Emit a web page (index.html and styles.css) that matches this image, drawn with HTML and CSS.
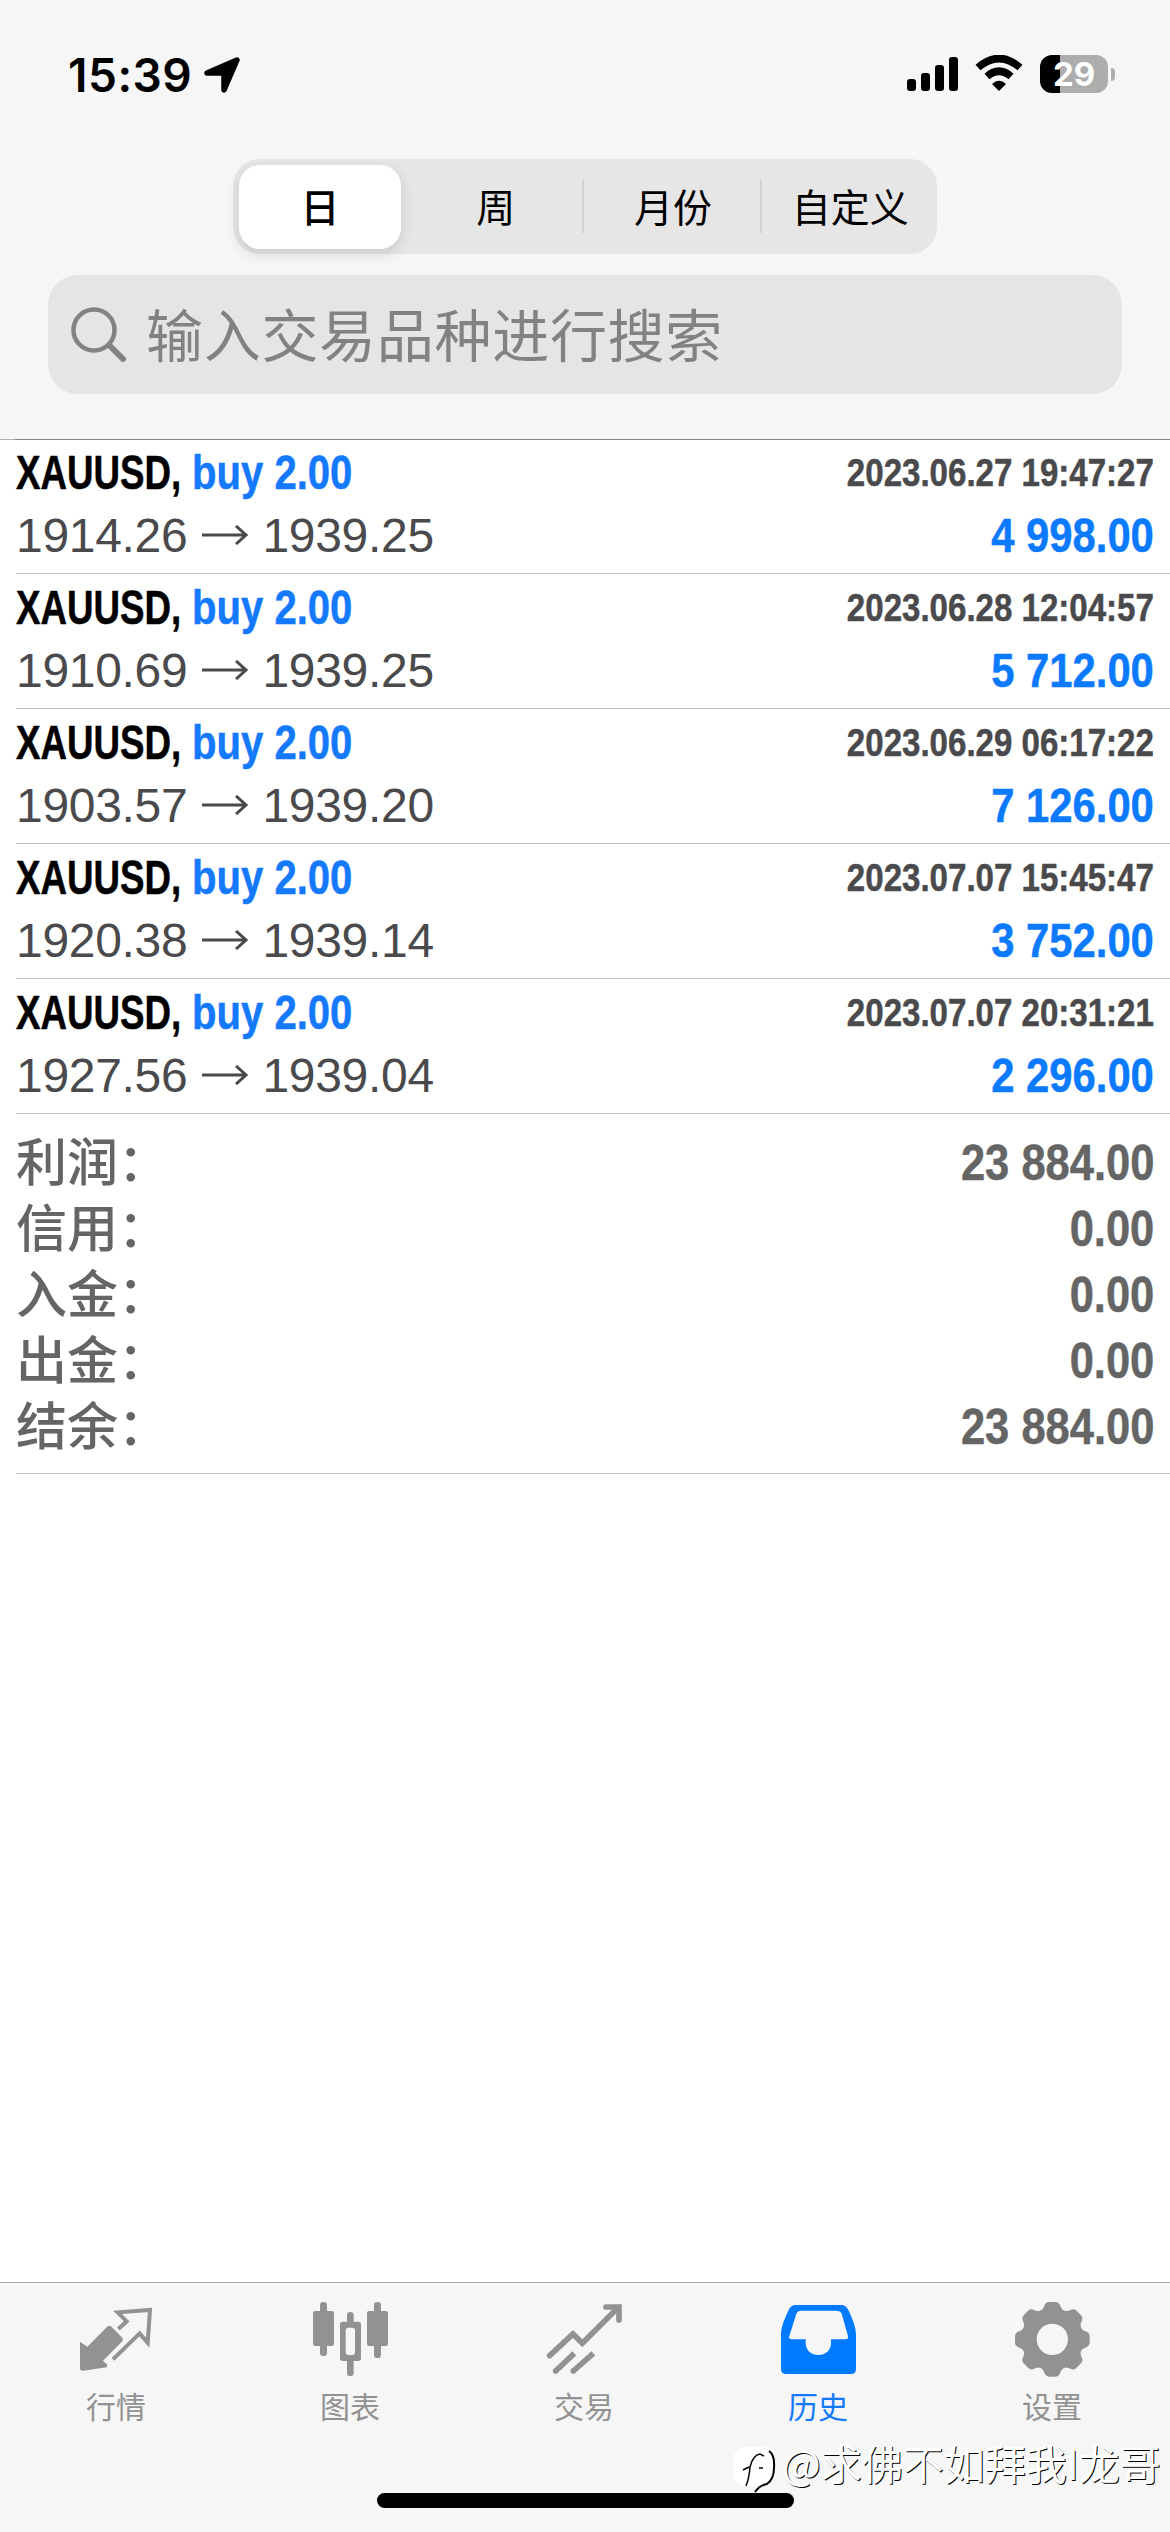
FILE: index.html
```html
<!DOCTYPE html>
<html lang="zh-CN">
<head>
<meta charset="utf-8">
<title>历史</title>
<link rel="stylesheet" href="styles.css">
</head>
<body>
<div class="screen">
  <header class="header">
    <div class="status">
      <div class="status-left">
        <span class="clock">15:39</span>
        <svg class="location" viewBox="0 0 36 36"><path d="M33 3 20 33V16H3Z" fill="#000" stroke="#000" stroke-width="5.500" stroke-linejoin="round"/></svg>
      </div>
      <div class="status-right">
        <svg class="signal" viewBox="0 0 51 34"><rect y="22" width="9" height="12" rx="3"/><rect x="14" y="16" width="9" height="18" rx="3"/><rect x="28" y="8" width="9" height="26" rx="3"/><rect x="42" width="9" height="34" rx="3"/></svg>
        <svg class="wifi" viewBox="0 0 48 36"><path d="M3 12.500Q24-5.500 45 12.500M12 21.500Q24 11 36 21.500" fill="none" stroke="#000" stroke-width="7.500"/><path d="M24 36 17 29Q24 22.500 31 29Z"/></svg>
        <div class="battery"><span class="battery-body">29</span><span class="battery-nub"></span></div>
      </div>
    </div>
    <nav class="segments">
      <span class="segment selected">日</span>
      <span class="segment">周</span>
      <span class="segment divided">月份</span>
      <span class="segment divided">自定义</span>
    </nav>
    <div class="search">
      <svg class="search-icon" viewBox="0 0 56 56"><circle cx="23" cy="23" r="20.500" fill="none" stroke="#828284" stroke-width="4.500"/><path d="M38 38 52 52" stroke="#828284" stroke-width="6" stroke-linecap="round"/></svg>
      <span>输入交易品种进行搜索</span>
    </div>
  </header>

  <main class="history">
    <section class="deals">
      <article class="deal">
        <div class="line"><div class="title"><span class="symbol narrow">XAUUSD,</span><b class="side narrow">buy 2.00</b></div><time class="narrow">2023.06.27 19:47:27</time></div>
        <div class="line second"><span class="prices">1914.26<svg class="arrow" viewBox="0 0 46 20"><path d="M0 10H44M34 1 44 10 34 19"/></svg>1939.25</span><span class="amount narrow">4 998.00</span></div>
      </article>
      <article class="deal">
        <div class="line"><div class="title"><span class="symbol narrow">XAUUSD,</span><b class="side narrow">buy 2.00</b></div><time class="narrow">2023.06.28 12:04:57</time></div>
        <div class="line second"><span class="prices">1910.69<svg class="arrow" viewBox="0 0 46 20"><path d="M0 10H44M34 1 44 10 34 19"/></svg>1939.25</span><span class="amount narrow">5 712.00</span></div>
      </article>
      <article class="deal">
        <div class="line"><div class="title"><span class="symbol narrow">XAUUSD,</span><b class="side narrow">buy 2.00</b></div><time class="narrow">2023.06.29 06:17:22</time></div>
        <div class="line second"><span class="prices">1903.57<svg class="arrow" viewBox="0 0 46 20"><path d="M0 10H44M34 1 44 10 34 19"/></svg>1939.20</span><span class="amount narrow">7 126.00</span></div>
      </article>
      <article class="deal">
        <div class="line"><div class="title"><span class="symbol narrow">XAUUSD,</span><b class="side narrow">buy 2.00</b></div><time class="narrow">2023.07.07 15:45:47</time></div>
        <div class="line second"><span class="prices">1920.38<svg class="arrow" viewBox="0 0 46 20"><path d="M0 10H44M34 1 44 10 34 19"/></svg>1939.14</span><span class="amount narrow">3 752.00</span></div>
      </article>
      <article class="deal">
        <div class="line"><div class="title"><span class="symbol narrow">XAUUSD,</span><b class="side narrow">buy 2.00</b></div><time class="narrow">2023.07.07 20:31:21</time></div>
        <div class="line second"><span class="prices">1927.56<svg class="arrow" viewBox="0 0 46 20"><path d="M0 10H44M34 1 44 10 34 19"/></svg>1939.04</span><span class="amount narrow">2 296.00</span></div>
      </article>
    </section>
    <dl class="summary">
      <div class="total"><dt>利润：</dt><dd class="narrow">23 884.00</dd></div>
      <div class="total"><dt>信用：</dt><dd class="narrow">0.00</dd></div>
      <div class="total"><dt>入金：</dt><dd class="narrow">0.00</dd></div>
      <div class="total"><dt>出金：</dt><dd class="narrow">0.00</dd></div>
      <div class="total"><dt>结余：</dt><dd class="narrow">23 884.00</dd></div>
    </dl>
  </main>

  <footer class="tabbar">
    <div class="tab">
      <svg class="tab-icon" viewBox="0 0 240 240"><path d="M9 131 31 146 92 85Q97 81 102 85L136 119Q140 124 136 130L78 188 91 200 89 208 19 218Q9 219 9 210Z" fill="#929292"/><path d="M124 93 149 70 122 43 219 36 212 134 188 106 108 184" fill="none" stroke="#929292" stroke-width="12"/></svg>
      <span>行情</span>
    </div>
    <div class="tab">
      <svg class="tab-icon" viewBox="0 0 240 240" fill="#929292"><rect x="27" y="12" width="21" height="162" rx="10"/><rect x="6" y="39" width="63" height="105" rx="7"/><rect x="108" y="42" width="20" height="192" rx="10"/><rect x="87" y="71" width="63" height="118" rx="8"/><rect x="104" y="89" width="28" height="82" rx="9" fill="#f6f6f6"/><rect x="189" y="12" width="21" height="168" rx="10"/><rect x="168" y="39" width="63" height="105" rx="7"/></svg>
      <span>图表</span>
    </div>
    <div class="tab">
      <svg class="tab-icon" viewBox="0 0 240 240" fill="none" stroke="#929292" stroke-width="17"><path d="M14 173 84 108 112 136 215 33M183 27H222V66" stroke-linecap="round"/><path d="M32 219 88 166M85 219 145 166"/><g fill="#929292" stroke="none"><circle cx="32" cy="219" r="8.500"/><circle cx="85" cy="219" r="8.500"/></g></svg>
      <span>交易</span>
    </div>
    <div class="tab active">
      <svg class="tab-icon" viewBox="0 0 240 240"><path fill="#007aff" fill-rule="evenodd" d="M50 21H187C199 21 204 28 209 38 220 62 231 85 231 111V213Q231 228 216 228H21Q6 228 6 213V111C6 85 17 62 28 38 33 28 38 21 50 21ZM66 38H171Q184 38 188 47L207 114Q209 124 199 124H156V134C156 156 140 171 118 171S80 156 80 134V124H38Q28 124 31 114L52 47Q56 38 66 38Z"/></svg>
      <span>历史</span>
    </div>
    <div class="tab">
      <svg class="tab-icon" viewBox="0 0 240 240"><defs><path id="tooth" d="M-38-84C-28-88-26-96-22-105Q-18-112-10-112H10Q18-112 22-105C26-96 28-88 38-84Z" fill="#929292"/></defs><g transform="translate(118 124)"><circle r="70" fill="none" stroke="#929292" stroke-width="46"/><use href="#tooth"/><use href="#tooth" transform="rotate(45)"/><use href="#tooth" transform="rotate(90)"/><use href="#tooth" transform="rotate(135)"/><use href="#tooth" transform="rotate(180)"/><use href="#tooth" transform="rotate(225)"/><use href="#tooth" transform="rotate(270)"/><use href="#tooth" transform="rotate(315)"/></g></svg>
      <span>设置</span>
    </div>
  </footer>

  <div class="home-indicator"></div>
  <div class="watermark">
    <svg class="watermark-logo" viewBox="0 0 44 46"><rect x="0" y="0" width="40" height="39" rx="11" fill="#fff"/><path d="M35 4Q41 8 40 21 40 32 33 37 26 38 21 45" fill="none" stroke="#000" stroke-width="2"/><path d="M12 39Q15 32 16 20 19 8 26 7L30 9M9 23 15 20M25 21H29" fill="none" stroke="#000" stroke-width="1.500"/></svg>
    <span>@求佛不如拜我I龙哥</span>
  </div>
</div>
</body>
</html>
```
FILE: styles.css
```css
* { box-sizing: border-box; }

body {
  margin: 0;
  background: #fff;
  font-family: "Liberation Sans", "Noto Sans CJK SC", sans-serif;
}

.screen {
  position: relative;
  display: flex;
  flex-direction: column;
  width: 1170px;
  height: 2532px;
  overflow: hidden;
}

/* Header */
.header {
  height: 440px;
  flex: none;
  display: flex;
  flex-direction: column;
  align-items: center;
  background: #f6f6f6;
  border-bottom: 1px solid #868686;
  border-image: linear-gradient(90deg, #b2b2b2 16px, #868686 16px) 1;
}

.status {
  width: 100%;
  height: 159px;
  flex: none;
  display: flex;
  justify-content: space-between;
  align-items: flex-start;
  padding: 55px 55px 0 68px;
}

.status-left, .status-right { display: flex; }

.clock {
  width: 136px;
  height: 38px;
  font: 600 46px/40px Inter, sans-serif;
  letter-spacing: .5px;
  white-space: nowrap;
}

.location { width: 36px; height: 36px; margin-top: 2px; }
.signal { width: 51px; height: 34px; margin: 2px 17px 0 0; }
.wifi { width: 48px; height: 36px; margin-right: 17px; }

.battery { display: flex; align-items: center; gap: 3px; }

.battery-body {
  width: 68px;
  height: 38px;
  border-radius: 12px;
  background: linear-gradient(90deg, #000 20px, #adadad 20px);
  color: #fff;
  font: 700 33px/38px Inter, sans-serif;
  text-align: center;
}

.battery-nub {
  width: 4px;
  height: 13px;
  border-radius: 0 5px 5px 0;
  background: #adadad;
}

.segments {
  display: flex;
  width: 704px;
  height: 95px;
  flex: none;
  padding: 6px 0;
  border-radius: 27px;
  background: #e6e6e6;
}

.segment {
  position: relative;
  flex: 1;
  font: 400 39px/80px "Noto Sans CJK SC", sans-serif;
  text-align: center;
}

.selected {
  flex: 0 0 162px;
  margin: 0 8px 0 6px;
  height: 84px;
  border-radius: 21px;
  background: #fff;
  font-weight: 500;
  box-shadow: 0 5px 14px rgba(0, 0, 0, .13);
}

.divided { padding-left: 4px; }

.divided::before {
  content: "";
  position: absolute;
  left: 0;
  top: 15px;
  width: 2px;
  height: 53px;
  background: #d1d1d2;
}

.search {
  display: flex;
  align-items: center;
  width: 1074px;
  height: 119px;
  margin-top: 21px;
  padding-left: 23px;
  border-radius: 30px;
  background: #e5e5e7;
  color: #828284;
  font: 400 57px/115px "Noto Sans CJK SC", sans-serif;
  letter-spacing: .7px;
}

.search span { height: 119px; }
.search-icon { width: 56px; height: 56px; margin-right: 19px; }

/* Deal list */
.history { flex: 1; padding-left: 16px; }

/* Condensed bold figures */
.narrow {
  display: block;
  font-weight: 700;
  white-space: nowrap;
  transform: scaleX(.87);
  transform-origin: right center;
  -webkit-text-stroke: .5px currentColor;
}

.deal {
  height: 135px;
  padding: 4px 16px 0 0;
  border-bottom: 1px solid #bebebf;
}

.deal:first-child { height: 134px; padding-top: 3px; }

.line {
  display: flex;
  justify-content: space-between;
  height: 60px;
  line-height: 60px;
}

.second { height: 66px; line-height: 66px; }

.title { display: flex; font-size: 48px; }
.symbol { width: 176px; transform: scaleX(.765); transform-origin: left center; }
.side { color: #147afb; transform: scaleX(.835); transform-origin: left center; }
time { font-size: 38px; color: #4a4a4d; }
.prices { font-size: 48px; letter-spacing: -.3px; color: #4a4a4d; white-space: nowrap; }
.amount { font-size: 48px; color: #0b7afc; }

.arrow {
  width: 46px;
  height: 20px;
  margin: 0 14px 7px 15px;
  fill: none;
  stroke: #4a4a4d;
  stroke-width: 3;
}

/* Totals */
.summary {
  height: 360px;
  margin: 0;
  padding: 16px 16px 0 0;
  border-bottom: 1px solid #bebebf;
  color: #656565;
}

.total {
  display: flex;
  justify-content: space-between;
  height: 66px;
}

dt { font: 500 51px/58px "Noto Sans CJK SC", sans-serif; }
dd { margin: 0; font-size: 50px; line-height: 66px; }

/* Tab bar */
.tabbar {
  display: flex;
  height: 250px;
  flex: none;
  padding-top: 15px;
  background: #f6f6f6;
  border-top: 1px solid #acacac;
}

.tab {
  flex: 1;
  display: flex;
  flex-direction: column;
  align-items: center;
  color: #929292;
  font: 400 30px/40px "Noto Sans CJK SC", sans-serif;
}

.tab-icon { width: 80px; height: 80px; margin-bottom: 7px; }
.tab span { margin-right: 2px; }
.active { color: #147afb; }

.home-indicator {
  position: absolute;
  left: 377px;
  top: 2493px;
  width: 417px;
  height: 15px;
  border-radius: 8px;
  background: #000;
}

.watermark {
  position: absolute;
  left: 734px;
  top: 2437px;
  display: flex;
  color: #fff;
  font: 400 41px/50px "Noto Sans CJK SC", sans-serif;
  text-shadow: 1px 1px 0 #000;
  white-space: nowrap;
}

.watermark-logo { width: 44px; height: 46px; margin: 10px 4px 0 0; }
```
